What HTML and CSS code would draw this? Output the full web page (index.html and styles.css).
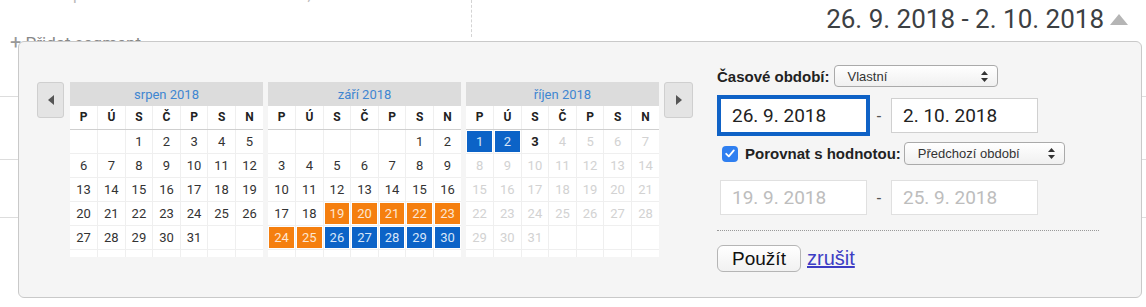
FILE: index.html
```html
<!DOCTYPE html>
<html lang="cs">
<head>
  <meta charset="UTF-8" />
  <title>Výběr období</title>
  <link rel="stylesheet" href="styles.css">
</head>
<body>

<!-- Report behind the picker -->
<div class="report">
  <div class="report-head">
    <div class="report-title">
      <div class="title-text">Přehled publika – Všichni uživatelé – 100,00 % uživatelů</div>
      <div class="segment"><span class="plus">+</span> Přidat segment</div>
    </div>
    <div class="date-range">26. 9. 2018 - 2. 10. 2018<span class="caret"></span></div>
  </div>
  <div class="report-row r1"></div>
  <div class="report-row r2"></div>
  <div class="report-row r3"></div>
</div>

<!-- Picker -->
<div class="picker">
  <div class="cal-nav" id="calNav">
    <button class="nav-btn"><svg width="6" height="10" viewBox="0 0 6 10"><path d="M6 0 L0 5 L6 10 Z" fill="#555"/></svg></button>
    <!-- calendars go here -->
    <button class="nav-btn" id="nextBtn"><svg width="6" height="10" viewBox="0 0 6 10"><path d="M0 0 L6 5 L0 10 Z" fill="#555"/></svg></button>
  </div>

  <div class="panel">
    <div class="row">
      <span class="lbl">Časové období:</span>
      <div class="select period">Vlastní
        <svg class="arrows" width="7" height="11" viewBox="0 0 7 11"><path d="M3.5 0 L7 4 L0 4 Z M0 7 L7 7 L3.5 11 Z" fill="#333"/></svg>
      </div>
    </div>
    <div class="range main">
      <input class="field active" type="text" value="26. 9. 2018" readonly />
      <span class="dash">-</span>
      <input class="field" type="text" value="2. 10. 2018" readonly />
    </div>
    <div class="row compare">
      <span class="check"><svg width="10" height="9" viewBox="0 0 10 9"><path d="M1.2 4.8 L3.8 7.4 L8.8 1.4" stroke="#fff" stroke-width="1.8" fill="none" stroke-linecap="round" stroke-linejoin="round"/></svg></span>
      <span class="lbl">Porovnat s hodnotou:</span>
      <div class="select prev-period">Předchozí období
        <svg class="arrows" width="7" height="11" viewBox="0 0 7 11"><path d="M3.5 0 L7 4 L0 4 Z M0 7 L7 7 L3.5 11 Z" fill="#333"/></svg>
      </div>
    </div>
    <div class="range faded">
      <input class="field" type="text" value="19. 9. 2018" readonly />
      <span class="dash">-</span>
      <input class="field" type="text" value="25. 9. 2018" readonly />
    </div>
    <div class="sep"></div>
    <div class="actions">
      <button class="apply">Použít</button>
      <a href="#" class="cancel">zrušit</a>
    </div>
  </div>
</div>

<script>
  const dayNames = ['P', 'Ú', 'S', 'Č', 'P', 'S', 'N'];
  const months = [
    { name: 'srpen 2018', month: 8, first: 2, days: 31 },
    { name: 'září 2018', month: 9, first: 5, days: 30 },
    { name: 'říjen 2018', month: 10, first: 0, days: 31 }
  ];

  function dayClass(m, d) {
    if (m === 9 && d >= 19 && d <= 25) return 'cmp';
    if ((m === 9 && d >= 26) || (m === 10 && d <= 2)) return 'sel';
    if (m === 10 && d === 3) return 'today';
    if (m === 10 && d > 3) return 'future';
    return '';
  }

  function buildMonth(mo) {
    let html = '<table class="cal"><thead><tr><th class="title" colspan="7">' + mo.name + '</th></tr>';
    html += '<tr class="dow">' + dayNames.map(n => '<td>' + n + '</td>').join('') + '</tr></thead><tbody>';
    let day = 1 - mo.first;
    for (let r = 0; r < 5; r++) {
      html += '<tr>';
      for (let c = 0; c < 7; c++, day++) {
        if (day < 1 || day > mo.days) html += '<td></td>';
        else html += '<td class="' + dayClass(mo.month, day) + '">' + day + '</td>';
      }
      html += '</tr>';
    }
    html += '<tr class="pad">' + '<td></td>'.repeat(7) + '</tr></tbody></table>';
    return html;
  }

  const next = document.getElementById('nextBtn');
  months.forEach(mo => next.insertAdjacentHTML('beforebegin', buildMonth(mo)));
</script>

</body>
</html>
```

FILE: styles.css
```css
* { box-sizing: border-box; }
body {
  margin: 0;
  font-family: Roboto, "Liberation Sans", sans-serif;
  background: #fff;
  position: relative;
  height: 307px;
  overflow: hidden;
}

/* report underneath */
.report-head {
  display: flex;
  height: 40px;
}
.report-title {
  width: 472px;
  height: 37px;
  border-right: 1px dashed #d4d4d4;
}
.title-text {
  margin-top: -13px;
  padding-left: 15px;
  font-size: 16px;
  line-height: 16px;
  color: #bbb;
  white-space: nowrap;
}
.segment {
  margin-top: 27px;
  padding-left: 10px;
  font-size: 17px;
  color: #888;
}
.plus { font-size: 20px; color: #999; }
.date-range {
  flex: 1;
  display: flex;
  justify-content: flex-end;
  align-items: center;
  height: 38px;
  padding-right: 18px;
  font-size: 26px;
  color: #3c4043;
}
.caret {
  margin-left: 6px;
  border-left: 9px solid transparent;
  border-right: 9px solid transparent;
  border-bottom: 11px solid #b5b5b5;
}
.report-row { border-bottom: 1px solid #ddd; }
.report-row.r1 { height: 57px; }
.report-row.r2 { height: 63px; }
.report-row.r3 { height: 58px; }

/* picker box */
.picker {
  position: absolute;
  left: 18px;
  top: 41px;
  width: 1124px;
  height: 257px;
  background: #f5f5f5;
  border: 1px solid #c9c9c9;
  border-radius: 6px;
  padding: 23px 0 0 18px;
  display: flex;
  align-items: flex-start;
}
.cal-nav {
  display: flex;
  align-items: flex-start;
  gap: 5px;
  margin-top: 17px;
}
.nav-btn {
  width: 27px;
  height: 36px;
  padding: 0;
  margin-right: 1px;
  background: #e4e4e4;
  border: 1px solid #cfcfcf;
  border-radius: 3px;
  display: flex;
  align-items: center;
  justify-content: center;
}
#nextBtn { width: 29px; margin: 0; }

/* calendars */
.cal {
  width: 193px;
  border-collapse: collapse;
  table-layout: fixed;
  background: #fff;
  font-size: 13px;
  color: #333;
}
.cal th.title {
  height: 24px;
  padding: 0;
  background: #dcdcdc;
  color: #3f86d1;
  font-weight: normal;
  font-size: 13px;
}
.cal td {
  height: 24px;
  padding: 0;
  text-align: center;
  border: 1px solid #efefef;
}
.cal tr td:first-child { border-left: none; }
.cal tr td:last-child { border-right: none; }
.cal .dow td {
  height: 23px;
  font-weight: bold;
  font-size: 12px;
  color: #222;
  border-top: none;
  border-bottom: 1px solid #cfcfcf;
}
.cal .pad td { height: 8px; border-bottom: none; }
.cal td.cmp {
  background: #f57f0f;
  color: #fde6d2;
  box-shadow: inset 0 0 0 1px #fff;
}
.cal td.sel {
  background: #0c63c7;
  color: #d8e6f8;
  box-shadow: inset 0 0 0 1px #fff;
}
.cal td.today { font-weight: bold; color: #222; }
.cal td.future { color: #d2d2d2; }

/* right panel */
.panel {
  margin-left: 24px;
  font-family: "Liberation Sans", sans-serif;
}
.row {
  display: flex;
  align-items: center;
  height: 22px;
}
.lbl {
  font-weight: bold;
  font-size: 15px;
  color: #222;
}
.select {
  position: relative;
  height: 22px;
  margin-left: 4px;
  padding-left: 13px;
  display: flex;
  align-items: center;
  font-size: 13px;
  color: #333;
  background: linear-gradient(#fff, #f0f0f0);
  border: 1px solid #aaa;
  border-radius: 4px;
}
.select .arrows {
  position: absolute;
  right: 9px;
  top: 5px;
}
.select.period { width: 164px; }
.select.prev-period { width: 161px; height: 23px; margin-left: 3px; }

.range {
  display: flex;
  align-items: center;
  margin-top: 11px;
  padding-left: 3px;
}
.field {
  width: 147px;
  height: 35px;
  padding: 0 0 0 11px;
  border: 1px solid #d0d0d0;
  background: #fff;
  font-family: Roboto, sans-serif;
  font-size: 19px;
  color: #222;
  outline: none;
}
.field.active {
  border-color: #0f62c6;
  outline: 3px solid #0f62c6;
}
.dash {
  width: 24px;
  text-align: center;
  font-size: 16px;
  color: #555;
}
.compare { height: 23px; margin-top: 9px; }
.check {
  width: 16px;
  height: 16px;
  margin: 0 7px 0 5px;
  border-radius: 4px;
  background: #2f7ff0;
  display: flex;
  align-items: center;
  justify-content: center;
}
.range.faded { margin-top: 15px; }
.faded .field {
  border-color: #e0e0e0;
  color: #bdbdbd;
}
.sep {
  width: 382px;
  margin-top: 15px;
  border-top: 1px dotted #999;
}
.actions {
  display: flex;
  align-items: center;
  margin-top: 14px;
}
.apply {
  width: 84px;
  height: 27px;
  padding: 0;
  font-family: "Liberation Sans", sans-serif;
  font-size: 19px;
  color: #111;
  background: linear-gradient(#fff, #f1f1f1);
  border: 1px solid #b5b5b5;
  border-radius: 6px;
}
.cancel {
  margin-left: 6px;
  font-size: 20px;
  color: #3d3dc4;
}
```
